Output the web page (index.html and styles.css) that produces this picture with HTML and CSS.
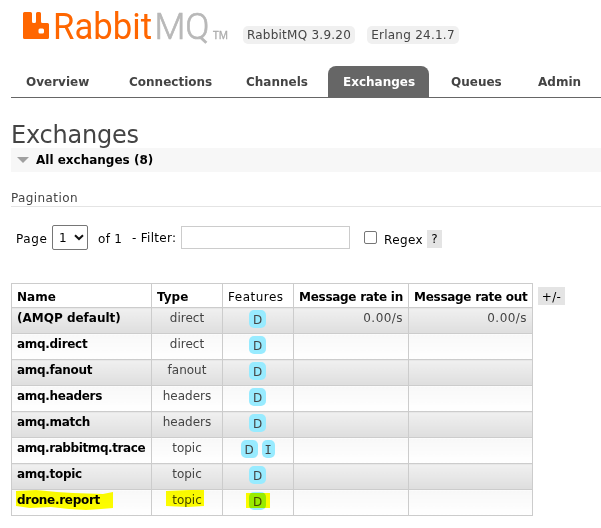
FILE: index.html
```
<!DOCTYPE html>
<html lang="en">
<head>
<meta charset="utf-8">
<title>RabbitMQ Management</title>
<link rel="stylesheet" href="styles.css">
</head>
<body>
<header>
  <svg class="logo" width="210" height="46" viewBox="0 -10 210 46">
    <path fill="#ff6600" fill-rule="evenodd" d="M1 3.500Q1 2 2.500 2H8.500Q10 2 10 3.500V11.500Q10 13 11.500 13H12.500Q14 13 14 11.500V3.500Q14 2 15.500 2H17.500Q19 2 19 3.500V11.500Q19 13 20.500 13H25.500Q27 13 27 14.500V27.500Q27 29 25.500 29H2.500Q1 29 1 27.500ZM16.500 20V22Q16.500 23.500 18 23.500H20.500Q22 23.500 22 22V20Q22 18.500 20.500 18.500H18Q16.500 18.500 16.500 20Z"/>
    <text class="logo-text rabbit" x="31" y="29" textLength="99" lengthAdjust="spacingAndGlyphs">Rabbit</text>
    <text class="logo-text mq" x="132.500" y="29" textLength="55" lengthAdjust="spacingAndGlyphs">MQ</text>
    <text class="tm" x="191" y="28.500" textLength="15" lengthAdjust="spacingAndGlyphs">TM</text>
  </svg>
  <span class="version v-rabbit">RabbitMQ 3.9.20</span>
  <span class="version v-erlang">Erlang 24.1.7</span>
</header>
<nav>
  <a>Overview</a><a>Connections</a><a>Channels</a><a class="selected">Exchanges</a><a>Queues</a><a>Admin</a>
</nav>
<main>
  <h1>Exchanges</h1>
  <h2><svg width="12" height="6" viewBox="0 0 12 6"><path d="M0 0H12L6 6Z" fill="#a0a0a0"/></svg><span>All exchanges (8)</span></h2>
  <h3>Pagination</h3>
  <form class="filter">
    <span class="page">Page</span>
    <span class="select"><span>1</span><svg width="10" height="7" viewBox="0 0 10 7"><path d="M1 1.200L5 5L9 1.200" fill="none" stroke="#111" stroke-width="2"/></svg></span>
    <span class="of">of 1</span>
    <span class="label">- Filter:</span>
    <span class="input"></span>
    <span class="check"></span>
    <span class="regex">Regex</span>
    <span class="help">?</span>
  </form>
  <div class="list">
    <table>
      <colgroup><col class="c1"><col class="c2"><col class="c3"><col class="c4"><col class="c5"></colgroup>
      <thead><tr><th>Name</th><th>Type</th><th class="plain">Features</th><th class="rate">Message rate in</th><th class="rate">Message rate out</th></tr></thead>
      <tbody>
        <tr><td><b class="default">(AMQP default)</b></td><td>direct</td><td><i>D</i></td><td>0.00/s</td><td>0.00/s</td></tr>
        <tr><td><b>amq.direct</b></td><td>direct</td><td><i>D</i></td><td></td><td></td></tr>
        <tr><td><b>amq.fanout</b></td><td>fanout</td><td><i>D</i></td><td></td><td></td></tr>
        <tr><td><b>amq.headers</b></td><td>headers</td><td><i>D</i></td><td></td><td></td></tr>
        <tr><td><b>amq.match</b></td><td>headers</td><td><i>D</i></td><td></td><td></td></tr>
        <tr><td><b class="trace">amq.rabbitmq.trace</b></td><td>topic</td><td><i>D</i><i class="internal">I</i></td><td></td><td></td></tr>
        <tr><td><b>amq.topic</b></td><td>topic</td><td><i>D</i></td><td></td><td></td></tr>
        <tr><td><b>drone.report</b></td><td>topic</td><td><i>D</i></td><td></td><td></td></tr>
      </tbody>
    </table>
    <span class="toggle">+/-</span>
    <svg class="marker" width="270" height="26" viewBox="0 0 270 26">
      <path fill="#ff0" d="M5 2L25 1L46 3L62 4L92 5L102 3V19L90 20L75 21L58 20L40 18L19 19L5 17ZM155 2L178 1H193V17L177 18L155 17ZM235 4H259V19H235Z"/>
    </svg>
  </div>
</main>
</body>
</html>
```
FILE: styles.css
```
* { box-sizing: border-box; }
body { margin: 0; background: #fff; color: #444; font: 12px/18px "DejaVu Sans", Verdana, sans-serif; width: 601px; height: 528px; overflow: hidden; white-space: nowrap; }
header { display: flex; height: 66px; padding-left: 22px; }
.logo { display: block; flex: none; overflow: visible; }
.logo-text { font-family: Roboto, sans-serif; font-size: 37.500px; }
.rabbit { fill: #ff6600; }
.mq { fill: #b8b8b8; font-weight: 300; stroke: #b8b8b8; stroke-width: .7px; }
.tm { font: 10px "Open Sans", sans-serif; fill: #aaa; stroke: #aaa; stroke-width: .3px; }
.version { height: 18px; margin-top: 26px; border-radius: 5px; background: #f0f0f0; text-align: center; letter-spacing: .25px; line-height: 19px; }
.v-rabbit { width: 112px; margin-left: 11px; }
.v-erlang { width: 92px; margin-left: 12px; }
nav { display: grid; grid-template-columns: 96px 110px 90px 101px 80px 71px; column-gap: 7px; height: 32px; margin-left: 11px; border-bottom: 1px solid #666; }
nav a { height: 31px; padding-left: 15px; line-height: 33px; font-weight: bold; }
nav .selected { color: #fff; background: #666; border-radius: 8px 8px 0 0; }
main { padding-left: 11px; }
h1 { margin: 0; height: 50px; padding-top: 21px; font-size: 24px; font-weight: normal; line-height: 32px; letter-spacing: -.22px; }
h2 { margin: 0; height: 24px; display: flex; align-items: center; gap: 7px; padding-left: 6px; background: #f7f7f7; color: #000; font-size: 12px; line-height: 24px; }
h3 { margin: 0; height: 35px; padding-top: 17px; font-size: 12px; font-weight: normal; letter-spacing: .4px; border-bottom: 1px solid #e4e4e4; }
.filter { display: flex; height: 76px; padding: 18px 0 0 5px; color: #000; }
.filter > span { flex: none; }
.page { width: 36px; padding-top: 5px; letter-spacing: .6px; }
.select { width: 36px; height: 25px; border: 1px solid #767676; border-radius: 2px; display: flex; align-items: center; padding-left: 6px; gap: 7px; line-height: 25px; }
.select span { padding-top: 2px; }
.of { width: 34px; margin-left: 10px; padding-top: 5px; letter-spacing: .3px; }
.label { width: 49px; padding-top: 4px; letter-spacing: .3px; }
.input { width: 169px; height: 23px; margin-top: 1px; border: 1px solid #ccc; }
.check { width: 13px; height: 13px; margin: 6px 0 0 14px; border: 1px solid #767676; border-radius: 2px; }
.regex { width: 43px; margin-left: 7px; padding-top: 6px; letter-spacing: .4px; }
.help { width: 15px; height: 18px; margin-top: 5px; background: #e4e4e4; text-align: center; }
.list { display: flex; position: relative; }
table { width: 522px; table-layout: fixed; border-collapse: collapse; }
.c1 { width: 140px; } .c2 { width: 71px; } .c3 { width: 71px; } .c4 { width: 115px; } .c5 { width: 124px; }
th, td { border: 1px solid #ccc; padding: 0 5px; text-align: left; vertical-align: top; overflow: visible; }
th { height: 24px; color: #000; padding-top: 4px; }
th.plain { font-weight: normal; letter-spacing: .5px; }
.rate { letter-spacing: -.28px; }
td { height: 26px; padding-top: 1px; text-align: center; }
td:first-child { text-align: left; color: #000; }
td:nth-child(n+4) { text-align: right; letter-spacing: .45px; }
tbody tr:nth-child(odd) td { background: linear-gradient(#f0f0f0, #dedede); }
tbody tr:nth-child(even) td { background: linear-gradient(#f8f8f8, #fff); }
td b { letter-spacing: -.3px; }
td .default { letter-spacing: 0; }
td .trace { letter-spacing: -.4px; }
i { display: inline-block; width: 17px; height: 18px; margin-top: 1px; border-radius: 5px; background: #98ebff; font-style: normal; line-height: 20px; vertical-align: top; }
td:nth-child(3) { padding: 1px 3px 0 2px; }
.internal { width: 13px; margin-left: 4px; font-family: "DejaVu Sans Mono", monospace; }
.toggle { width: 27px; height: 18px; margin: 4px 0 0 5px; background: #e4e4e4; color: #000; text-align: center; letter-spacing: .4px; line-height: 20px; }
.marker { position: absolute; left: 0; top: 206px; mix-blend-mode: multiply; }
```
